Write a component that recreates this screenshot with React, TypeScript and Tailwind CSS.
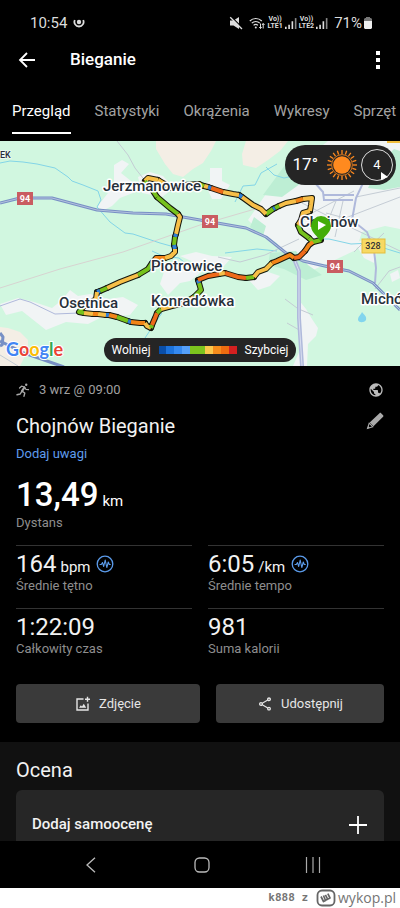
import type { ReactNode } from 'react'
import { MdPublic, MdOutlineShare } from 'react-icons/md'

const TABS = ['Przegląd', 'Statystyki', 'Okrążenia', 'Wykresy', 'Sprzęt']

const GREEN = '#76c21c'
const YELLOW = '#f7bf48'
const ORANGE = '#f28418'
const DEEP = '#ee6a1a'
const BLUE = '#2f7fd6'

const PACE_SCALE = ['#0a4ea8', '#1d73dc', '#3589f0', '#55a0fb', '#7cc41e', '#7cc41e', '#fbc84c', '#f58c1c', '#ee6c10', '#d42020']

// pace-coloured pieces of the track, drawn in running order
const TRACK: [string, string][] = [
    [GREEN, '321,99 313,101 309,97'],
    [GREEN, '309,97 301,91 298,84'],
    [YELLOW, '298,84 301,79 303,72 310,70'],
    [YELLOW, '310,70 311,64 312,57 303,58'],
    [ORANGE, '303,58 296,60'],
    [YELLOW, '296,60 286,62 279,65'],
    [GREEN, '279,65 275,67'],
    [BLUE, '275,67 273,68'],
    [GREEN, '273,68 266,73'],
    [YELLOW, '266,73 261,68 253,64 242,56'],
    [BLUE, '242,56 239,54'],
    [YELLOW, '239,54 233,53 223,51'],
    [DEEP, '223,51 211,47'],
    [BLUE, '211,47 208,46'],
    [YELLOW, '208,46 204,45'],
    [GREEN, '204,45 199,43'],
    [YELLOW, '199,43 184,44 170,47 163,42 158,39'],
    [YELLOW, '158,39 148,37 145,40'],
    [GREEN, '145,40 153,50 157,56'],
    [GREEN, '157,56 170,67 178,73'],
    [YELLOW, '178,73 180,76 178,84 176,93'],
    [BLUE, '176,93 175,96'],
    [GREEN, '175,96 174,104'],
    [BLUE, '174,104 175,108'],
    [YELLOW, '175,108 175,111 171,115 165,117'],
    [ORANGE, '165,117 156,117 152,122'],
    [GREEN, '152,122 148,128 138,134'],
    [YELLOW, '138,134 120,141 107,147'],
    [GREEN, '107,147 100,150'],
    [BLUE, '100,150 97,151'],
    [YELLOW, '97,151 96,158 90,162 83,166'],
    [GREEN, '83,166 79,171 84,172'],
    [YELLOW, '84,172 93,173'],
    [ORANGE, '93,173 98,173'],
    [YELLOW, '98,173 106,174'],
    [BLUE, '106,174 109,174'],
    [ORANGE, '109,174 117,176'],
    [GREEN, '117,176 128,180'],
    [BLUE, '128,180 131,181'],
    [ORANGE, '131,181 140,182 145,182'],
    [YELLOW, '145,182 147,185 151,187'],
    [GREEN, '151,187 152,184'],
    [DEEP, '152,184 155,177 157,172'],
    [GREEN, '157,172 161,168'],
    [YELLOW, '161,168 172,165 184,162 194,156'],
    [GREEN, '194,156 201,149 199,142'],
    [BLUE, '199,142 198,139'],
    [DEEP, '198,139 208,135 219,133'],
    [YELLOW, '219,133 225,132'],
    [DEEP, '225,132 238,136 246,137'],
    [GREEN, '246,137 254,136'],
    [YELLOW, '254,136 258,131 266,128 272,122'],
    [ORANGE, '272,122 277,120 290,114 294,117'],
    [DEEP, '294,117 299,116 305,110'],
    [ORANGE, '305,110 309,104 313,101'],
]

const PLACES: [string, number, number][] = [
    ['Jerzmanowice', 103, 50],
    ['Chojnów', 300, 86],
    ['Piotrowice', 151, 130],
    ['Osetnica', 59, 167],
    ['Konradówka', 151, 165],
    ['Michó', 361, 163],
]

function RouteMap() {
    return (
        <svg viewBox="0 0 400 225" className="block w-full" role="img" aria-label="Mapa trasy biegu">
            <rect width="400" height="225" fill="#d1f7e0" />
            <g fill="#f4eee5">
                <path d="M156 0v8l9 15 8 10 10 3 10-8 10-6 8-12 5-10z" />
                <path d="M246 0l-4 13 1 11 13 3 12-8 12-9 8-10z" />
                <path d="M0 186l8 1 12 4 8 8v10l-8 16H0z" />
            </g>
            <path d="M266 53l22-7 12-10 8-20 20-16h72v88l-15-3-23 6-6 18-34 16-18 8-18-14-9-17-16-10-13-13z" fill="#f0f4f4" />
            <path d="M380 22l14-14 6 2v36l-16 3-16-2zM288 20l18 4-2 16-22 16-19-2zM270 112l26-2 12 14 14 10-16 5-22-11-16-4zM254 76l12 9-3 10-13-9z" fill="#bdeed4" />
            <g fill="#f1f4f5">
                <path d="M114 24l8-5 7 4-8 9 10 8 7 10-18 7-8 8-8 4-7-3 11-14 6-12z" />
                <path d="M138 36l12-5 13 4 11 12-12 9-20-4zM210 27h12v13l8 4-9 14h-9l-7-15 5-3z" />
                <path d="M0 163l18-6 16 4 18 6 10-8 8-10 8 6 12-2 18 5 15-2 15 8-8 10-30 3-12 6-22-2-20 8-24-19-16 4z" />
                <path d="M164 131l16-5 20 6-10 8-10 2-12 12-8-11zM180 115l16-4 16 4 20 1-8 9-28-3zM246 136l22-5 12 4-10 10-12 4z" />
                <path d="M298 158l8 10 6 10 6 9-2 8-8 8-1 22h-14l7-16z" />
                <path d="M355 102l10-4 12 12-3 12-10-5zM390 133l8-4 2 8-8 4z" />
            </g>
            <g fill="none" stroke="#83d5e7" strokeWidth="1">
                <path d="M0 22l10-2 13 1 14 2 18 4 13 9 4 4 11 4 15 6 3 9-4 7 13 15 15 11 8 1 27 9 18 5M235 61l8-16 12-1 6-12 16-9M266 26l8 8 10 3 14-3 10-10M311 98l18 0 22 5 20-1 16 6 13 4M152 110l11 5 16 2 10 8 15 4M225 112l32-4 20 2M145 197l10-15 7-10" />
            </g>
            <g fill="none" stroke="#c4ccd4" strokeWidth="1">
                <path d="M117 0l11 14 7 13 11 14M0 214l18 11M301 170l-16-12M301 190l-14-8M313 174l-12-5" />
                <path d="M0 147l60-19 63-17 77-27 55-16" stroke="#d7d3d1" />
                <path d="M302 62l52 26 46 22M312 72l42-22M322 86l78-30M336 60l-12 30M343 60l-8 36M326 72l30 8M356 56l44-9M370 95l-16 16M305 104l24-15M364 111l20-19M325 40l-13-24M375 148l14-18 11-4M218 116l22 5 25-7 34-16" />
            </g>
            <g fill="none" stroke="#afb9db" strokeWidth="2">
                <path d="M0 165l20-7 10 3 25 12 24-1" strokeWidth="1" />
                <path d="M323 54h31M323 59h30M324 59l-1-8-8-9-5-16M352 79l4-22 7-15 12-14" />
                <path d="M352 79l15 12 7 18 2 18-1 15" />
                <path d="M294 118l5 12v47l3 48" strokeWidth="4" />
                <path d="M294 118l5 12v47l3 48" stroke="#d8def0" strokeWidth="1" />
            </g>
            <g fill="none" strokeLinejoin="round">
                <path d="M0 62l20-5h32l45 12 36 3 33 1 34 6 46 8 20 9 20 16 17 8 26 6 20 4 24 12 27 27" stroke="#7890c5" strokeWidth="3" />
                <path d="M0 62l20-5h32l45 12 36 3 33 1 34 6 46 8 20 9 20 16 17 8 26 6 20 4 24 12 27 27" stroke="#b4c2de" strokeWidth="1" />
                <path d="M0 200l24 12 40 14M0 192l3 4-1 8-2 1" stroke="#7890c5" strokeWidth="3" />
            </g>
            <path d="M362 171c2 3 5 4 4 8-2 3-7 3-8 0 0-4 3-5 4-8z" fill="#82d5ee" />

            <g fill="none" stroke="#15170e" strokeWidth="6" strokeLinejoin="round" strokeLinecap="round">
                {TRACK.map(([, points]) => <polyline key={points} points={points} />)}
            </g>
            <g fill="none" strokeWidth="4" strokeLinejoin="round">
                {TRACK.map(([color, points]) => <polyline key={points} points={points} stroke={color} />)}
            </g>

            <g fill="#c95c61">
                <rect x="17" y="51" width="16" height="13" />
                <rect x="202" y="74" width="16" height="13" />
                <rect x="327" y="119" width="16" height="13" />
            </g>
            <g fill="#fff" fontSize="9" fontWeight="700" textAnchor="middle">
                <text x="25" y="61">94</text>
                <text x="210" y="84">94</text>
                <text x="335" y="129">94</text>
            </g>
            <path d="M387 0h13v2h-13z" fill="#efbd3c" />
            <rect x="362" y="98" width="23" height="14" fill="#f7d963" stroke="#e3bd3c" />
            <text x="373" y="108" fontSize="9" fontWeight="500" textAnchor="middle" fill="#333">328</text>

            <g fill="#27303a" stroke="#fff" strokeWidth="3" strokeLinejoin="round" paintOrder="stroke" fontSize="15" fontWeight="500">
                {PLACES.map(([name, x, y]) => <text key={name} x={x} y={y}>{name}</text>)}
                <text x="0" y="17" fontSize="9" strokeWidth="1">EK</text>
            </g>
            <path d="M321 101c-2-5-10-9-10-16a10 10 0 0 1 20 0c0 7-8 11-10 16z" fill="#42ad08" />
            <path d="M318 80v9l8-5z" fill="#fff" />

            <text x="6" y="215" fontFamily="Lato, sans-serif" fontSize="18" fontWeight="700" stroke="#fff" strokeWidth="2" paintOrder="stroke">
                <tspan fill="#4285f4">G</tspan><tspan fill="#ea4335">o</tspan><tspan fill="#fbbc05">o</tspan><tspan fill="#4285f4">g</tspan><tspan fill="#34a853">l</tspan><tspan fill="#ea4335">e</tspan>
            </text>
        </svg>
    )
}

function Sun() {
    return (
        <svg viewBox="0 0 32 32" className="size-8">
            <circle cx="16" cy="16" r="8.800" fill="#ff8a1f" />
            <g stroke="#ff8a1f" strokeWidth="1.300">
                {Array.from({ length: 20 }, (_, i) => (
                    <path key={i} d="M16 1v4" transform={`rotate(${i * 18} 16 16)`} />
                ))}
            </g>
            <circle cx="16" cy="16" r="10.400" fill="none" stroke="#ff8a1f" strokeWidth="0.800" />
        </svg>
    )
}

function Bars() {
    return (
        <svg viewBox="0 0 11 11" className="size-3" fill="#ddd">
            <path d="M0 9h1.500v2H0zM3 7h1.500v4H3zM6 4h1.500v7H6z" />
            <path d="M9 1h1.500v10H9z" fill="#888" />
        </svg>
    )
}

function Lte({ n }: { n: number }) {
    return (
        <span className="flex flex-col items-center text-[7px] leading-[7px] font-bold">
            <span>Vo))</span>
            <span>LTE{n}</span>
        </span>
    )
}

function PulseIcon() {
    return (
        <svg viewBox="0 0 18 18" className="ml-1.5 size-[18px] self-center" fill="none" stroke="#5b9bea" strokeWidth="1.300" strokeLinejoin="round" strokeLinecap="round">
            <circle cx="9" cy="9" r="7.800" />
            <path d="M4 9.500h1.300l1.200-2 1.200 4L9.200 5l1.600 7.500L12.300 7l1 2.500h1" strokeWidth="1.100" />
        </svg>
    )
}

function Stat({ value, unit, label, icon }: { value: string; unit?: string; label: string; icon?: ReactNode }) {
    return (
        <div className="border-t border-[#333] pt-1 pb-3.5">
            <div className="flex h-7 items-baseline text-2xl leading-7 text-[#f2f2f2]">
                {value}
                {unit && <span className="ml-1 text-[15px] leading-7">{unit}</span>}
                {icon}
            </div>
            <div className="text-[13px] leading-4 text-[#8e8e8e]">{label}</div>
        </div>
    )
}

export default function App() {
    return (
        <div className="bg-black font-[Roboto,sans-serif] text-white">
            <div className="flex h-10 items-center justify-between pt-1.5 pr-7 pl-[30px] text-[#dcdcdc]">
                <div className="flex items-center gap-1.5 text-[15px]">
                    10:54
                    <svg viewBox="0 0 12 12" className="size-3" fill="none" stroke="#ddd" strokeWidth="1.800">
                        <path d="M1.800 3a4.600 4.600 0 1 0 8.400 0" />
                        <circle cx="6" cy="5" r="2.200" fill="#ddd" stroke="none" />
                    </svg>
                </div>
                <div className="flex items-center gap-0.5">
                    <svg viewBox="0 0 14 14" className="mr-1 size-3.5" fill="#ddd">
                        <path d="M1 4.500h3.500L10 1v12L4.500 9.500H1z" />
                        <path d="M2 .5l11.500 11.500" stroke="#000" strokeWidth="1.200" />
                        <path d="M1.200 1.200L13 13" stroke="#ddd" strokeWidth="1.300" />
                    </svg>
                    <svg viewBox="0 0 16 12" className="h-3 w-4" fill="none" stroke="#ddd" strokeWidth="1.200">
                        <path d="M.8 4a8.500 8.500 0 0 1 12 0M2.800 6.200a5.600 5.600 0 0 1 8 0M4.600 8.300a3 3 0 0 1 4.300 0" />
                        <circle cx="6.800" cy="10.500" r="1" fill="#ddd" stroke="none" />
                        <path d="M11.500 6.500v5M10.200 10l1.300 1.500 1.200-1.500M14.200 11.500v-5M13 8l1.200-1.500L15.500 8" strokeWidth="1" />
                    </svg>
                    <Lte n={1} />
                    <Bars />
                    <Lte n={2} />
                    <Bars />
                    <span className="ml-1 text-[15px]">71%</span>
                    <svg viewBox="0 0 8 12" className="h-3 w-2">
                        <path d="M2 0h4v1h1l1 1v3H0V2l1-1h1z" fill="#777" />
                        <path d="M0 4h8v7l-1 1H1l-1-1z" fill="#eee" />
                    </svg>
                </div>
            </div>

            <header className="flex h-10 items-center pr-4 pl-[18px]">
                <button type="button" aria-label="Wstecz">
                    <svg viewBox="0 0 18 18" className="size-[18px]" fill="none" stroke="#fff" strokeWidth="1.800">
                        <path d="M17 9H2.500M9 2L2 9l7 7" />
                    </svg>
                </button>
                <h1 className="ml-[34px] flex-1 text-[17px] font-medium">Bieganie</h1>
                <button type="button" aria-label="Więcej" className="flex flex-col gap-[3px] px-1">
                    <span className="size-1 bg-white" />
                    <span className="size-1 bg-white" />
                    <span className="size-1 bg-white" />
                </button>
            </header>

            <nav className="flex h-[61px] gap-6 overflow-hidden pt-[18px] pl-3 text-[15px] whitespace-nowrap">
                {TABS.map((tab, i) => (
                    <a key={tab} href="#" className={i === 0 ? 'h-9 border-b-2 border-white pt-0.5' : 'h-9 pt-0.5 text-[#a3a3a3]'}>{tab}</a>
                ))}
            </nav>

            <section className="relative">
                <RouteMap />
                <div className="absolute top-1 right-1 flex h-10 items-center rounded-full bg-[#252525] pr-[3px] pl-2 text-[17px]">
                    <span className="mr-2">17°</span>
                    <Sun />
                    <div className="relative ml-[3px] flex size-8 items-center justify-center rounded-full border border-[#ddd] text-[13px]">
                        4
                        <svg viewBox="0 0 8 8" className="absolute right-1 bottom-0 size-2"><path d="M1 0l7 5-7 3z" fill="#fff" /></svg>
                    </div>
                </div>
                <div className="absolute inset-x-0 bottom-1 flex justify-center">
                    <div className="flex h-6 items-center gap-2 rounded-full bg-[#252525] px-2 text-xs">
                        <span>Wolniej</span>
                        <div className="flex h-2 w-[78px]">
                            {PACE_SCALE.map((c, i) => <span key={i} className="flex-1" style={{ background: c }} />)}
                        </div>
                        <span>Szybciej</span>
                    </div>
                </div>
            </section>

            <main className="px-4 pt-3.5">
                <div className="flex h-5 items-center text-[13px] text-[#a0a0a0]">
                    <svg viewBox="0 0 14 14" className="mr-[9px] size-3.5" fill="none" stroke="#a8a8a8" strokeWidth="1.400" strokeLinejoin="round" strokeLinecap="round">
                        <circle cx="10.200" cy="1.700" r="1.200" fill="#a8a8a8" stroke="none" />
                        <path d="M3.500 5L5.500 3.200l3 .8 1.500 2.500 2.500.2" strokeWidth="1.200" />
                        <path d="M8.300 4.500L6 8.200" strokeWidth="2.200" />
                        <path d="M6 8.200L8.800 10l-.8 3.200M5.500 8.800L4.200 11l-3.200.8" />
                    </svg>
                    3 wrz @ 09:00
                    <MdPublic className="ml-auto size-4 text-[#bbb]" />
                </div>
                <div className="mt-3 flex h-7 items-center justify-between">
                    <h2 className="text-[20px] text-[#f2f2f2]">Chojnów Bieganie</h2>
                    <button type="button" aria-label="Edytuj nazwę" className="self-start">
                        <svg viewBox="0 0 18 18" className="size-[18px]" fill="#aaa">
                            <path d="M13.500 1.200c.5-.5 1.100-.5 1.600 0l2 2c.5.5.500 1.100 0 1.600L7.500 14.300 3.700 10.500z" />
                            <path d="M3.200 11.200L6.800 14.800 1.500 16.500z" fill="none" stroke="#aaa" strokeWidth="1.100" />
                            <path d="M1.200 16.800l1-2.800 1.800 1.800z" />
                        </svg>
                    </button>
                </div>
                <a href="#" className="mt-1 block w-fit text-[13px] leading-5 text-[#5f9ced]">Dodaj uwagi</a>

                <div className="mt-[11px] flex items-baseline text-[33px] leading-10 font-medium">
                    13,49
                    <span className="ml-1 text-[15px] leading-5 font-normal">km</span>
                </div>
                <div className="text-[13px] leading-4 text-[#8e8e8e]">Dystans</div>

                <div className="mt-3.5 grid grid-cols-2 gap-x-4">
                    <Stat value="164" unit="bpm" label="Średnie tętno" icon={<PulseIcon />} />
                    <Stat value="6:05" unit="/km" label="Średnie tempo" icon={<PulseIcon />} />
                    <Stat value="1:22:09" label="Całkowity czas" />
                    <Stat value="981" label="Suma kalorii" />
                </div>

                <div className="mt-[13px] grid grid-cols-[23fr_21fr] gap-4 text-[13px] text-[#e6e6e6]">
                    <button type="button" className="flex h-[39px] items-center justify-center gap-2 rounded bg-[#3a3a3a]">
                        <svg viewBox="0 0 16 16" className="size-4" fill="none" stroke="#e6e6e6" strokeWidth="1.400">
                            <path d="M8.500 3H2v11h11V7.500M12.500 .8v5M10 3.300h5" />
                            <path d="M4 11.800l1.800-2.500 1.200 1.200 1.800-2.700 2.400 4z" fill="#e6e6e6" stroke="none" />
                        </svg>
                        Zdjęcie
                    </button>
                    <button type="button" className="flex h-[39px] items-center justify-center gap-2 rounded bg-[#3a3a3a]">
                        <MdOutlineShare className="size-4" />
                        Udostępnij
                    </button>
                </div>
            </main>

            <section className="mt-[19px] bg-[#111] px-4 pt-3.5">
                <h2 className="text-[20px] leading-7 text-[#f2f2f2]">Ocena</h2>
                <button type="button" className="mt-1.5 flex h-[51px] w-full items-center justify-between rounded-t-md bg-[#262626] px-4 pt-[18px] text-[15px] font-medium text-[#f2f2f2]">
                    Dodaj samoocenę
                    <svg viewBox="0 0 20 20" className="size-5" stroke="#fff" strokeWidth="1.800"><path d="M10 1v18M1 10h18" /></svg>
                </button>
            </section>

            <nav className="grid h-[47px] grid-cols-3 place-items-center pr-8 pl-9">
                <button type="button" aria-label="Wstecz">
                    <svg viewBox="0 0 16 16" className="size-4" fill="none" stroke="#bbb" strokeWidth="1.300"><path d="M12 .8L4 8l8 7.200" /></svg>
                </button>
                <button type="button" aria-label="Ekran główny">
                    <svg viewBox="0 0 16 16" className="size-4" fill="none" stroke="#bbb" strokeWidth="1.300"><rect x="1" y="1" width="14" height="14" rx="4.500" /></svg>
                </button>
                <button type="button" aria-label="Ostatnie">
                    <svg viewBox="0 0 16 16" className="size-4" stroke="#aaa" strokeWidth="1.200"><path d="M1.500 0v16M8 0v16M14.500 0v16" /></svg>
                </button>
            </nav>

            <footer className="flex h-5 items-center justify-end bg-white pr-1 text-[#757575]">
                <span className="mr-2 font-['DejaVu_Sans_Mono',monospace] text-[11px] font-bold">k888 z</span>
                <svg viewBox="0 0 20 18" className="h-[18px] w-5" fill="none" stroke="#666" strokeWidth="1.800">
                    <rect x="1.500" y="1.500" width="17" height="15" rx="4.500" />
                    <path d="M5 7.500l2.500 5 2-1-2-5M9 11.500l2.600-1.300-2.200-4.400M12 10l2-1-2.200-4.400" strokeWidth="1.700" strokeLinejoin="round" />
                </svg>
                <span className="ml-0.5 font-[Open_Sans,sans-serif] text-[14px] leading-5">wykop.pl</span>
            </footer>
        </div>
    )
}
